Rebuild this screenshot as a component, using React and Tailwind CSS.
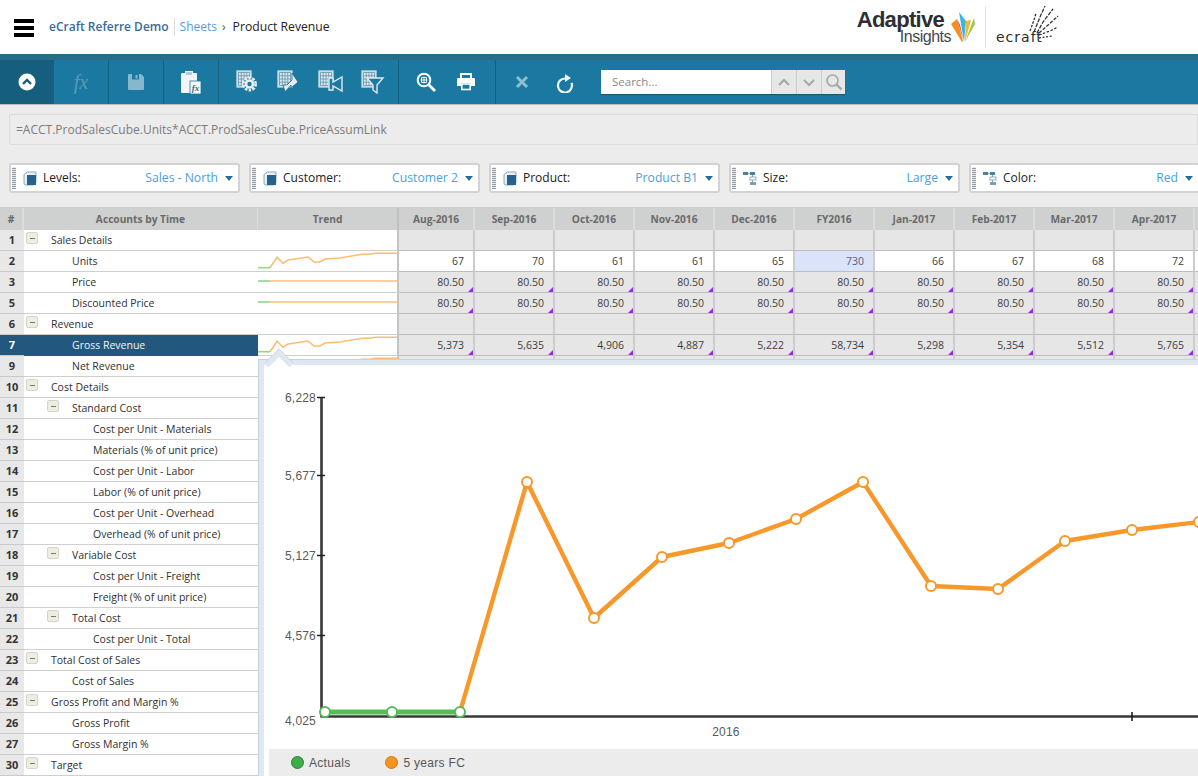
import React from "react";

const months = [
  { h: "Aug-2016", w: "w-[76px]", u: "67", r: "5,373" },
  { h: "Sep-2016", w: "w-[80px]", u: "70", r: "5,635" },
  { h: "Oct-2016", w: "w-[80px]", u: "61", r: "4,906" },
  { h: "Nov-2016", w: "w-[80px]", u: "61", r: "4,887" },
  { h: "Dec-2016", w: "w-[80px]", u: "65", r: "5,222" },
  { h: "FY2016", w: "w-[80px]", u: "730", r: "58,734", fy: true },
  { h: "Jan-2017", w: "w-[80px]", u: "66", r: "5,298" },
  { h: "Feb-2017", w: "w-[80px]", u: "67", r: "5,354" },
  { h: "Mar-2017", w: "w-[80px]", u: "68", r: "5,512" },
  { h: "Apr-2017", w: "w-[80px]", u: "72", r: "5,765" },
  { h: "", w: "w-[80px]", u: "", r: "", empty: true },
];

const rows = [
  { n: 1, t: "Sales Details", l: 0, box: true, kind: "blank" },
  { n: 2, t: "Units", l: 1, spark: "curve", kind: "units" },
  { n: 3, t: "Price", l: 1, spark: "flat", kind: "price" },
  { n: 5, t: "Discounted Price", l: 1, spark: "flat", kind: "price" },
  { n: 6, t: "Revenue", l: 0, box: true, kind: "blank" },
  { n: 7, t: "Gross Revenue", l: 1, spark: "curve", kind: "rev", sel: true },
  { n: 9, t: "Net Revenue", l: 1, spark: "curve", kind: "rev" },
  { n: 10, t: "Cost Details", l: 0, box: true },
  { n: 11, t: "Standard Cost", l: 1, box: true },
  { n: 12, t: "Cost per Unit - Materials", l: 2, spark: "flat" },
  { n: 13, t: "Materials (% of unit price)", l: 2, spark: "flat" },
  { n: 14, t: "Cost per Unit - Labor", l: 2, spark: "flat" },
  { n: 15, t: "Labor (% of unit price)", l: 2, spark: "flat" },
  { n: 16, t: "Cost per Unit - Overhead", l: 2, spark: "flat" },
  { n: 17, t: "Overhead (% of unit price)", l: 2, spark: "flat" },
  { n: 18, t: "Variable Cost", l: 1, box: true },
  { n: 19, t: "Cost per Unit - Freight", l: 2, spark: "flat" },
  { n: 20, t: "Freight (% of unit price)", l: 2, spark: "flat" },
  { n: 21, t: "Total Cost", l: 1, box: true },
  { n: 22, t: "Cost per Unit - Total", l: 2, spark: "flat" },
  { n: 23, t: "Total Cost of Sales", l: 0, box: true },
  { n: 24, t: "Cost of Sales", l: 1, spark: "flat" },
  { n: 25, t: "Gross Profit and Margin %", l: 0, box: true },
  { n: 26, t: "Gross Profit", l: 1, spark: "flat" },
  { n: 27, t: "Gross Margin %", l: 1, spark: "flat" },
  { n: 30, t: "Target", l: 0, box: true },
];

function Spark({ type }) {
  if (type === "flat") {
    return (
      <svg width="139" height="20" className="block">
        <path d="M12 9H139" stroke="#fcc07a" strokeWidth="1.6" fill="none" />
        <path d="M0 9H12" stroke="#8fd68f" strokeWidth="1.6" fill="none" />
      </svg>
    );
  }
  return (
    <svg width="139" height="20" className="block">
      <path d="M12 16.7L19 6.3L25 12.3L30 9L50 6L56 11L62 11L67 8L82 7L104 3.3L112 3.3L117 2.3L139 2.3" stroke="#fcbc72" strokeWidth="1.6" fill="none" />
      <path d="M0 16.7H12" stroke="#8fd68f" strokeWidth="1.6" fill="none" />
    </svg>
  );
}

function Tri() {
  return <span className="absolute right-0 bottom-0 h-0 w-0 border-l-[5px] border-b-[5px] border-l-transparent border-b-[#9a26e6]" />;
}

function MonthCell({ m, row }) {
  const base = `${m.w} shrink-0 relative h-full flex items-center justify-end pt-[1px] pr-[9px] border-r-2 border-r-[#cdcdcd] border-b border-b-[#bdbdbd] text-[#3d3d3d]`;
  if (row.kind === "units") {
    return <div className={`${base} ${m.fy ? "bg-[#dbe3fa] text-[#55607a]" : "bg-white"}`}>{m.u}</div>;
  }
  if (row.kind === "price") {
    return <div className={`${base} bg-[#e6e6e6]`}>{m.empty ? "" : "80.50"}<Tri /></div>;
  }
  if (row.kind === "rev") {
    return <div className={`${base} bg-[#e6e6e6]`}>{m.r}<Tri /></div>;
  }
  return <div className={`${base} bg-[#e6e6e6]`} />;
}

function Row({ row }) {
  const indent = row.l === 0 ? "pl-[27px]" : row.l === 1 ? "pl-[48px]" : "pl-[69px]";
  return (
    <div className="flex h-[21px]">
      <div className={`w-[24px] shrink-0 flex items-center justify-center pt-[1px] text-[11px] font-bold border-b border-[#cacaca] ${row.sel ? "bg-[#22577e] text-white" : "bg-[#e8e8e8] text-[#333333]"}`}>{row.n}</div>
      <div className={`w-[234px] shrink-0 relative flex items-center pt-[1px] ${indent} border-b ${row.sel ? "bg-[#22577e] text-[#f2f5f8] border-[#22577e]" : "bg-white text-[#2f2f2f] border-[#cfcfcf]"}`}>
        {row.box && (
          <span className={`absolute top-[2px] ${row.l === 0 ? "left-[2px]" : "left-[23px]"} w-[12px] h-[12px] rounded-[2px] bg-[#eeede2] border border-[#d5d5c8] flex items-center justify-center`}>
            <span className="w-[5px] h-px bg-[#777777]" />
          </span>
        )}
        {row.t}
      </div>
      <div className="w-[141px] shrink-0 bg-white border-b border-[#cfcfcf] border-r-2 border-r-[#c4c4c4]">
        {row.spark && <Spark type={row.spark} />}
      </div>
      {row.kind && months.map((m, i) => <MonthCell key={i} m={m} row={row} />)}
    </div>
  );
}

function Cube() {
  return (
    <svg width="14" height="15" viewBox="0 0 14 15" className="shrink-0">
      <path d="M1 3.5L4 1H13V12L11 14H3Q1 14 1 12Z" fill="#e8eef3" stroke="#8fa8bb" strokeWidth="1" />
      <rect x="4" y="4" width="9" height="10" fill="#22638f" />
    </svg>
  );
}

function Tree() {
  return (
    <svg width="14" height="15" viewBox="0 0 14 15" className="shrink-0">
      <rect x="0" y="1" width="5" height="3" fill="#4b7fa6" />
      <rect x="7" y="1" width="5" height="3" fill="#4b7fa6" />
      <path d="M5 2.5H7M9.5 4V13" stroke="#8ca6ba" fill="none" />
      <rect x="7" y="6" width="6" height="3" fill="#fff" stroke="#7f9db3" strokeWidth="0.8" />
      <rect x="7" y="11" width="6" height="3" fill="#7f9db3" />
    </svg>
  );
}

function Filter({ label, value, icon, last }) {
  return (
    <div className={`h-[30px] w-[231px] shrink-0 flex items-center bg-white border-2 border-[#d3d3d3] rounded-[3px] pl-[1px] pr-[5px] text-[12px] ${last ? "" : "mr-[9px]"}`}>
      <span className="w-[4px] h-[22px] bg-[repeating-linear-gradient(0deg,#8f9ca3_0,#8f9ca3_1px,#e9ecee_1px,#e9ecee_2px)] mr-[7px]" />
      {icon === "cube" ? <Cube /> : <Tree />}
      <span className="ml-[6px] text-[#222222]">{label}</span>
      <span className="ml-auto text-[12.2px] text-[#4c9fd9]">{value}</span>
      <span className="ml-[7px] w-0 h-0 border-l-[4.5px] border-r-[4.5px] border-t-[5px] border-l-transparent border-r-transparent border-t-[#2a6a98]" />
    </div>
  );
}

function GridBase() {
  const v = [];
  for (let i = 0; i <= 4; i++) v.push(<path key={`v${i}`} d={`M${2.5 + i * 2.75} 2.5V15.5`} stroke="#5f93ad" strokeWidth="0.8" />);
  for (let i = 0; i <= 4; i++) v.push(<path key={`h${i}`} d={`M2.5 ${2.5 + i * 3.25}H13.5`} stroke="#5f93ad" strokeWidth="0.8" />);
  return (
    <>
      <rect x="1" y="1" width="14" height="16" fill="#dfe9ee" stroke="#c4d6de" strokeWidth="1.4" />
      {v}
    </>
  );
}

function IconGear() {
  return (
    <svg width="28" height="24" viewBox="0 0 28 24">
      <GridBase />
      <circle cx="13.5" cy="14" r="6.2" fill="#1b79a1" stroke="#e8f0f4" strokeWidth="2.6" strokeDasharray="2.6 1.3" />
      <circle cx="13.5" cy="14" r="4.8" fill="#e8f0f4" />
      <circle cx="13.5" cy="14" r="2.2" fill="#1b79a1" />
    </svg>
  );
}
function IconArrows() {
  return (
    <svg width="28" height="24" viewBox="0 0 28 24">
      <GridBase />
      <path d="M15 3L21 12L14 18V15L8 22L6 15H10L15 10Z" fill="#e4eef2" stroke="#14688b" strokeWidth="0.8" />
    </svg>
  );
}
function IconVideo() {
  return (
    <svg width="28" height="24" viewBox="0 0 28 24">
      <GridBase />
      <path d="M11 8H15V12L24 7V21L15 16V20H11Z" fill="#1b79a1" stroke="#dfeaef" strokeWidth="1.4" />
    </svg>
  );
}
function IconFunnel() {
  return (
    <svg width="28" height="24" viewBox="0 0 28 24">
      <GridBase />
      <path d="M6 8H22L16 15V23L12 20V15Z" fill="#1b79a1" stroke="#dfeaef" strokeWidth="1.4" />
    </svg>
  );
}

function AdaptiveLogo() {
  return (
    <div className="flex items-center">
      <div className="w-[95px] h-[40px] font-['Liberation_Sans',sans-serif] text-[#2d2f33]">
        <span className="block text-right pr-[7px] mt-[2px] text-[22px] leading-[22px] font-bold tracking-[-0.7px]">Adaptive</span>
        <span className="block text-right text-[16px] leading-[12px] tracking-[-0.5px] text-[#45474b]">Insights</span>
      </div>
      <svg width="24" height="32" viewBox="0 0 24 32">
        <path d="M0 13L6 8L12 30L11 31Z" fill="#f58d25" />
        <path d="M6 8L9 14L13 31Z" fill="#e3442b" />
        <path d="M8 1L15 10L13 31Z" fill="#38b6e6" />
        <path d="M23 7L24 13L14 31Z" fill="#a9c23f" />
        <path d="M15 10L20 9L14 31Z" fill="#f2b632" />
      </svg>
    </div>
  );
}

function EcraftLogo() {
  return (
    <div className="relative flex items-end w-[64px] h-[36px]">
      <span className="font-['DejaVu_Sans',sans-serif] text-[14px] leading-[16px] tracking-[1px] text-[#2b2b2b]">ecraft</span>
      <svg width="36" height="36" viewBox="0 0 36 36" className="absolute left-[32px] top-[-5px]">
        <g stroke="#333333" strokeWidth="1.3" fill="none">
          <path d="M6 28L12 13L17 2" strokeDasharray="4 1.3" />
          <path d="M2 27L6 16L8 9" strokeDasharray="2.5 1.4" />
          <path d="M9 29L15 18L25 5" strokeDasharray="4 1.3" />
          <path d="M11 29L19 22L30 12" strokeDasharray="3.5 1.4" />
          <path d="M11 31L22 27L30 23" strokeDasharray="2.5 1.6" />
          <path d="M11 34L24 32" strokeDasharray="2 1.6" />
        </g>
      </svg>
    </div>
  );
}

function Chart() {
  const orange = "460,712 527,482 594,618 662,557 729,543 796,519 863,482 931,586 998,589 1065,541 1132,530 1199,522";
  const oPts = orange.split(" ").slice(1).map((p) => p.split(",").map(Number));
  const labels = [["6,228", 402], ["5,677", 480], ["5,127", 560], ["4,576", 640], ["4,025", 725]];
  return (
    <svg width="934" height="384" viewBox="264 365 934 384" className="block">
      <path d="M321.5 397V717.5M321 716.5H1198" stroke="#383838" strokeWidth="2.6" fill="none" />
      <path d="M317 397.5H325M317 475.5H325M317 555.5H325M317 635.5H325M1132 712V721" stroke="#222222" strokeWidth="1.6" fill="none" />
      {labels.map(([t, y]) => (
        <text key={t} x="316" y={y} textAnchor="end" fontSize="12" letterSpacing="0.2" fontFamily="Liberation Sans, sans-serif" fill="#595959">{t}</text>
      ))}
      <text x="726" y="736" textAnchor="middle" fontSize="12" letterSpacing="0.2" fontFamily="Liberation Sans, sans-serif" fill="#595959">2016</text>
      <polyline points={orange} fill="none" stroke="#f8982a" strokeWidth="4.4" strokeLinejoin="round" />
      <path d="M325 712H460" stroke="#57bb57" strokeWidth="5" fill="none" />
      {oPts.map(([x, y]) => (
        <circle key={x} cx={x} cy={y} r="5" fill="#ffffff" stroke="#f8982a" strokeWidth="2" />
      ))}
      <circle cx="325" cy="712" r="5" fill="#fff" stroke="#57bb57" strokeWidth="2" />
      <circle cx="392" cy="712" r="5" fill="#fff" stroke="#57bb57" strokeWidth="2" />
      <circle cx="460" cy="712" r="5" fill="#fff" stroke="#57bb57" strokeWidth="2" />
    </svg>
  );
}

function ToolSec({ w, dark, children }) {
  return (
    <div className={`${w} h-full flex items-center justify-center shrink-0 border-r border-r-[#13617f] ${dark ? "bg-[#155e7d]" : ""}`}>
      {children}
    </div>
  );
}

export default function App() {
  return (
    <div className="relative w-[1198px] h-[776px] overflow-hidden bg-[#ececec] font-['Open_Sans',sans-serif] text-[10.5px]">
      <header className="h-[54px] bg-white flex items-center pl-[14px]">
        <div className="w-[20px] flex flex-col gap-[3px] mt-[1px]">
          <span className="h-[4px] bg-black" />
          <span className="h-[4px] bg-black" />
          <span className="h-[4px] bg-black" />
        </div>
        <span className="ml-[15px] text-[12px] font-semibold text-[#3a6b97]">eCraft Referre Demo</span>
        <span className="ml-[5px] h-[18px] w-px bg-[#dddddd]" />
        <span className="ml-[5px] text-[12px] text-[#4f9fd9]">Sheets</span>
        <span className="ml-[5px] text-[12px] text-[#555555]">›</span>
        <span className="ml-[7px] text-[12.2px] text-[#222222]">Product Revenue</span>
        <div className="ml-auto flex items-center mr-[138px]">
          <AdaptiveLogo />
          <span className="ml-[10px] mr-[10px] h-[42px] w-px bg-[#e4e4e4]" />
          <EcraftLogo />
        </div>
      </header>

      <div className="h-[51px] bg-[#1b79a1] border-t-[6px] border-t-[#286c8b] border-b border-b-[#bdbdbd] flex items-stretch">
        <ToolSec w="w-[54px]" dark>
          <svg width="18" height="18" viewBox="0 0 18 18"><circle cx="9" cy="9" r="8.5" fill="#ffffff" /><path d="M5 11L9 7L13 11" stroke="#155e7d" strokeWidth="2.4" fill="none" /></svg>
        </ToolSec>
        <ToolSec w="w-[55px]">
          <span className="font-['Liberation_Serif',serif] italic text-[20px] leading-none text-[#5b9ab6]">fx</span>
        </ToolSec>
        <ToolSec w="w-[55px]">
          <svg width="18" height="18" viewBox="0 0 18 18"><path d="M1 2Q1 1 2 1H14L17 4V16Q17 17 16 17H2Q1 17 1 16Z" fill="#85b8cf" /><rect x="5" y="1" width="7" height="5.5" fill="#1b79a1" /><rect x="8.5" y="2" width="2" height="3.5" fill="#85b8cf" /></svg>
        </ToolSec>
        <ToolSec w="w-[55px]">
          <svg width="22" height="26" viewBox="0 0 22 26">
            <path d="M1 5Q1 4 2 4H5V2H13V4H16Q17 4 17 5V23Q17 24 16 24H2Q1 24 1 23Z" fill="#f2f6f8" />
            <rect x="6" y="3" width="6" height="3" fill="#b8cbd4" />
            <rect x="10" y="12" width="11" height="13" fill="#f7fafb" stroke="#1b79a1" strokeWidth="0.8" />
            <text x="15.5" y="22" textAnchor="middle" fontSize="9" fontWeight="700" fontFamily="Liberation Serif, serif" fontStyle="italic" fill="#1b6f93">fx</text>
          </svg>
        </ToolSec>
        <div className="w-[180px] h-full shrink-0 flex items-center pl-[17px] border-r border-r-[#13617f]">
          <IconGear />
          <span className="ml-[13px]"><IconArrows /></span>
          <span className="ml-[13px]"><IconVideo /></span>
          <span className="ml-[15px]"><IconFunnel /></span>
        </div>
        <ToolSec w="w-[97px]">
          <div className="flex items-center gap-[20px] mr-[2px]">
            <svg width="20" height="20" viewBox="0 0 20 20"><circle cx="8" cy="8" r="6.3" fill="none" stroke="#ffffff" strokeWidth="2" /><path d="M13 13L19 19" stroke="#ffffff" strokeWidth="2.8" /><path d="M8 4.5V11.5M4.5 8H11.5M5.5 5.5H10.5V10.5H5.5Z" stroke="#ffffff" strokeWidth="0.9" fill="none" /></svg>
            <svg width="20" height="18" viewBox="0 0 20 18"><path d="M5 5V1H15V5" fill="none" stroke="#fff" strokeWidth="2" /><path d="M1 6Q1 5 2 5H18Q19 5 19 6V13H15V10H5V13H1Z" fill="#fff" /><rect x="5.8" y="11" width="8.4" height="5.5" fill="none" stroke="#fff" strokeWidth="1.6" /></svg>
          </div>
        </ToolSec>
        <div className="w-[105px] h-full shrink-0 flex items-center gap-[27px] pl-[19px]">
          <svg width="14" height="14" viewBox="0 0 14 14"><path d="M2 2L12 12M12 2L2 12" stroke="#8fbdd1" strokeWidth="3" /></svg>
          <svg width="20" height="22" viewBox="0 0 20 22"><path d="M9 4.5A7 7 0 1 0 15.5 9" fill="none" stroke="#f2f6f8" strokeWidth="2.2" transform="translate(0 3)" /><path d="M9 3V11L15 7Z" fill="#f2f6f8" /></svg>
        </div>
        <div className="h-[24px] w-[244px] self-center flex bg-white shadow-[0_1px_1px_rgba(0,0,0,0.25)]">
          <div className="w-[170px] flex items-center pl-[11px] text-[11.5px] text-[#8a8a8a]">Search...</div>
          <div className="w-[25px] bg-[#e6e8e8] border-l border-[#c8cccc] flex items-center justify-center">
            <svg width="14" height="9" viewBox="0 0 14 9"><path d="M2 7L7 2L12 7" stroke="#a4a8a8" strokeWidth="2" fill="none" /></svg>
          </div>
          <div className="w-[25px] bg-[#e6e8e8] border-l border-[#c8cccc] flex items-center justify-center">
            <svg width="14" height="9" viewBox="0 0 14 9"><path d="M2 2L7 7L12 2" stroke="#a4a8a8" strokeWidth="2" fill="none" /></svg>
          </div>
          <div className="flex-1 bg-[#e6e8e8] border-l border-[#c8cccc] flex items-center justify-center">
            <svg width="18" height="18" viewBox="0 0 18 18"><circle cx="7.5" cy="7.5" r="5.5" fill="none" stroke="#a4a8a8" strokeWidth="1.6" /><path d="M11.5 11.5L16.5 16.5" stroke="#a4a8a8" strokeWidth="2.4" /></svg>
          </div>
        </div>
      </div>

      <div className="pl-[9px] pt-[9px]">
        <div className="h-[31px] w-[1189px] border border-[#dcdcdc] rounded-l-[2px] flex items-center pl-[6px] text-[12px] text-[#7b7b7b]">
          =ACCT.ProdSalesCube.Units*ACCT.ProdSalesCube.PriceAssumLink
        </div>
        <div className="flex mt-[18px] w-[1300px]">
          <Filter label="Levels:" value="Sales - North" icon="cube" />
          <Filter label="Customer:" value="Customer 2" icon="cube" />
          <Filter label="Product:" value="Product B1" icon="cube" />
          <Filter label="Size:" value="Large" icon="tree" />
          <Filter label="Color:" value="Red" icon="tree" last />
        </div>
      </div>

      <div className="mt-[14px] border-t border-[#cfcfcf]">
        <div className="flex h-[22px] bg-[#cfd1d1] font-bold text-[#6a6a6a] w-[1300px] text-[10.2px]">
          <div className="w-[24px] shrink-0 flex items-center justify-center pt-[1px] border-r-2 border-r-[#dcdcdc]">#</div>
          <div className="w-[234px] shrink-0 flex items-center justify-center pt-[1px] border-r border-r-[#dcdcdc]">Accounts by Time</div>
          <div className="w-[141px] shrink-0 flex items-center justify-center pt-[1px] border-r-2 border-r-[#bfc1c1]">Trend</div>
          {months.map((m, i) => (
            <div key={i} className={`${m.w} shrink-0 flex items-center justify-center pt-[1px] border-r-2 border-r-[#dcdcdc]`}>{m.h}</div>
          ))}
        </div>
        <div className="w-[1300px]">
          {rows.map((r) => <Row key={r.n} row={r} />)}
        </div>
      </div>

      <div className="absolute left-[259px] top-[360px] right-0 bottom-0 bg-white border-l-[5px] border-t-[5px] border-[#dfe8f0] shadow-[-1px_-1px_0_#c3d3e0]">
        <Chart />
        <div className="ml-[5px] h-[27px] bg-[#ececec] flex items-center pl-[22px] font-['Liberation_Sans',sans-serif] text-[12px] tracking-[0.3px] text-[#555555]">
          <span className="w-[13px] h-[13px] rounded-full bg-[#3fae49] border-[1.5px] border-[#2c7d34]" />
          <span className="ml-[5px]">Actuals</span>
          <span className="ml-[35px] w-[13px] h-[13px] rounded-full bg-[#f7941e] border-[1.5px] border-[#c97a1c]" />
          <span className="ml-[5px]">5 years FC</span>
        </div>
      </div>
      <div className="absolute left-[269px] top-[354px] w-[20px] h-[20px] rotate-45 bg-white border-l-[5px] border-t-[5px] border-[#dfe8f0] shadow-[-1px_-1px_0_#c3d3e0]" />
    </div>
  );
}
